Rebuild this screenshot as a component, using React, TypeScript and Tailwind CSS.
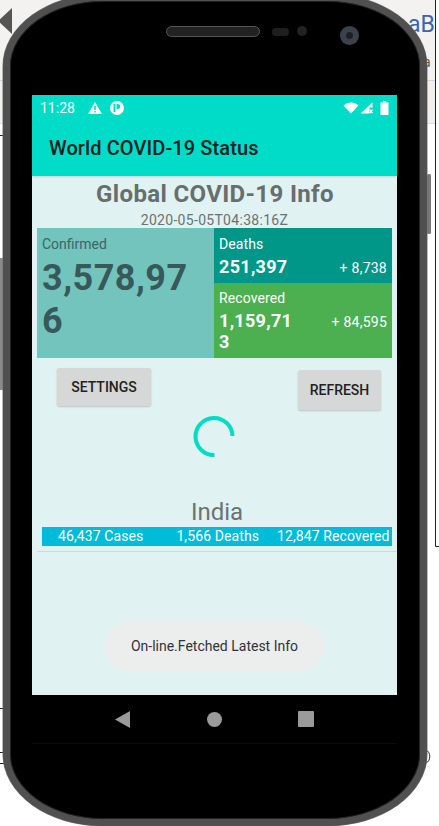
const font = { fontFamily: 'Roboto, "Noto Sans", sans-serif' };

function StatusIcons() {
  return (
    <div className="flex items-center">
      <svg width="16" height="12" viewBox="0 0 16 12"><path d="M0.5 3.5C4.8 -0.6 11.2 -0.6 15.5 3.5L8 11.5Z" fill="#fff" /></svg>
      <svg width="13" height="12" viewBox="0 0 13 12" className="ml-[1px]">
        <path d="M0.5 11.5L12.5 0.5V5.5H9.5V11.5Z" fill="#fff" />
        <path d="M9.7 7.7L12.5 11.2M12.5 7.7L9.7 11.2" stroke="#fff" strokeWidth="1.2" />
      </svg>
      <svg width="9" height="14" viewBox="0 0 9 14" className="ml-[7px]"><path d="M3 0H6V1.5H8.5V14H0.5V1.5H3Z" fill="#fff" /></svg>
    </div>
  );
}

function Stat({ label, value, delta, className }: { label: string; value: string; delta: string; className: string }) {
  return (
    <div className={`${className} px-[5px] text-white`}>
      <div className="text-[14px] leading-[18px] tracking-[0.1px]">{label}</div>
      <div className="flex items-start justify-between">
        <div className="w-[80px] break-all text-[18px] leading-[21px] font-bold tracking-[0.3px] mt-[3px]">{value}</div>
        <div className="text-[14px] leading-[18px] tracking-[0.25px] mt-[6px]">{delta}</div>
      </div>
    </div>
  );
}

const button = 'flex items-center justify-center rounded-[2px] bg-[#d6d7d7] text-[14px] font-medium text-[#222] shadow-[0_1px_2px_rgba(0,0,0,0.18)]';

export default function App() {
  return (
    <div className="relative h-[826px] w-[439px] overflow-hidden bg-white" style={font}>
      {/* desktop window showing behind the emulator */}
      <div className="absolute inset-0 flex flex-col">
        <div className="flex h-[81px] w-[435px] justify-end overflow-hidden border-b border-[#d4d4d4] bg-[#f3f2f0] pt-[11px]">
          <div className="flex flex-col items-start">
            <span className="text-[23px] leading-[28px] whitespace-nowrap text-[#3a66b0]">aB</span>
            <span className="ml-[15px] mt-[15px] w-[12px] overflow-hidden text-[14px] leading-[16px] text-[#555]">a</span>
          </div>
        </div>
        <div className="h-[43px] w-[435px] border-b border-[#dcdcdc] bg-[#f1f0ee]" />
      </div>
      <svg width="439" height="826" viewBox="0 0 439 826" className="absolute inset-0" fill="none">
        <path d="M-2 21L12 8L12 34Z" fill="#555" />
        <path d="M435.5 0V546.5H439M0 135.5H6M0 708.5H6M0 752.5H6M0 763.5H6M426 750C431 752 431 761 426 763" stroke="#222" />
        <rect x="427" y="174" width="4" height="60" rx="1.5" fill="#777" />
        <rect x="0" y="258" width="3" height="132" fill="#8a8a8a" />
      </svg>

      {/* phone body */}
      <div className="relative ml-[3px] mt-[-6px] h-[832px] w-[424px] rounded-[100px/72px] border-[7px] border-[#505050] bg-[#000] pl-[22px] shadow-[inset_0_0_0_1px_#222,0_0_0_0.5px_#777]">
        {/* earpiece, sensors, camera */}
        <div className="flex h-[94px] items-start pl-[134px] pt-[25px]">
          <div className="h-[11px] w-[94px] rounded-full border border-[#555] bg-[#222]" />
          <div className="ml-[12px] mt-[2px] h-[8px] w-[17px] rounded-full bg-[#1e1e1e]" />
          <div className="ml-[8px] h-[10px] w-[10px] rounded-full bg-[#222]" />
          <div className="ml-[33px] flex h-[19px] w-[19px] items-center justify-center rounded-full bg-[#3c424c]">
            <div className="h-[7px] w-[7px] rounded-full bg-[#1d2026]" />
          </div>
        </div>

        {/* screen */}
        <div className="relative h-[600px] w-[365px] bg-[#e0f2f1]">
          <div className="flex h-[24px] items-center justify-between bg-[#00dcc8] px-[8px] pt-[1px]">
            <div className="flex items-center">
              <span className="text-[14px] leading-[20px] text-white">11:28</span>
              <svg width="14" height="12" viewBox="0 0 14 12" className="ml-[13px]">
                <path fillRule="evenodd" d="M7 0L14 12H0ZM6.2 4V8H7.8V4ZM6.2 9V10.6H7.8V9Z" fill="#fff" />
              </svg>
              <svg width="14" height="14" viewBox="0 0 14 14" className="ml-[8px]">
                <path fillRule="evenodd" d="M7 0A7 7 0 1 1 7 14A7 7 0 1 1 7 0ZM3.5 3V11H5.5V3ZM6.5 3V8H8C11 8 11 3 8 3Z" fill="#fff" />
              </svg>
            </div>
            <StatusIcons />
          </div>
          <div className="flex h-[57px] items-center bg-[#00dcc8] pl-[17px] pt-[1px] text-[20px] font-medium tracking-[0.1px] text-[#0b2320] shadow-[0_1px_2px_rgba(0,0,0,0.12)]">
            World COVID-19 Status
          </div>

          <div className="pt-[3px] text-center">
            <div className="pl-[1px] text-[24px] leading-[30px] font-bold tracking-[0.35px] text-[#666e6e]">Global COVID-19 Info</div>
            <div className="mt-[3px] text-[14px] leading-[16px] tracking-[0.3px] text-[#6b7272]">2020-05-05T04:38:16Z</div>
          </div>

          <div className="mx-[5px] grid h-[130px] w-[355px] grid-cols-[177px_178px]">
            <div className="bg-[#73c4bd] pl-[5px] pt-[7px] text-[#37595a]">
              <div className="text-[14px] leading-[18px] text-[#3f6365]">Confirmed</div>
              <div className="mt-[4px] w-[155px] break-all text-[36px] leading-[43px] font-bold tracking-[0.5px]">3,578,976</div>
            </div>
            <div className="flex flex-col">
              <Stat label="Deaths" value="251,397" delta="+ 8,738" className="h-[55px] bg-[#009688] pt-[7px]" />
              <Stat label="Recovered" value="1,159,713" delta="+ 84,595" className="h-[75px] bg-[#4caf50] pt-[6px]" />
            </div>
          </div>

          <div className="flex items-start justify-between pl-[25px] pr-[16px] pt-[10px]">
            <div className={`${button} h-[38px] w-[94px]`}>SETTINGS</div>
            <div className={`${button} mt-[2px] h-[40px] w-[83px]`}>REFRESH</div>
          </div>

          <div className="mt-[6px] flex justify-center pr-[1px]">
            <svg width="42" height="42" viewBox="0 0 42 42" fill="none">
              <path d="M21.5 39A18.5 18.5 0 1 1 39.5 20" stroke="#00dcc8" strokeWidth="4" />
            </svg>
          </div>

          <div className="mt-[39px] pl-[5px] text-center text-[24px] leading-[30px] text-[#6b7272]">India</div>
          <div className="ml-[10px] flex h-[19px] w-[350px] bg-[#00bcd9] pl-[16px] text-[14px] leading-[19px] tracking-[0.1px] text-white">
            <span>46,437 Cases</span>
            <span className="ml-[33px]">1,566 Deaths</span>
            <span className="ml-[18px]">12,847 Recovered</span>
          </div>
          <div className="ml-[5px] mt-[5px] h-[1px] bg-[#c9dcdb]" />

          {/* toast */}
          <div className="absolute left-[73px] top-[526px] flex h-[51px] w-[219px] items-center justify-center rounded-[26px] bg-[#eceeed] text-[14px] text-[#333]">
            On-line.Fetched Latest Info
          </div>
        </div>

        {/* nav bar */}
        <div className="flex h-[49px] w-[365px] items-center border-b border-[#0a0a0a] pl-[83px]">
          <svg width="15" height="17" viewBox="0 0 15 17"><path d="M15 0V17L0 8.5Z" fill="#9a9a9a" /></svg>
          <div className="ml-[77px] h-[15px] w-[15px] rounded-full bg-[#9a9a9a]" />
          <div className="ml-[76px] h-[16px] w-[16px] rounded-[1px] bg-[#9a9a9a]" />
        </div>
      </div>
    </div>
  );
}
